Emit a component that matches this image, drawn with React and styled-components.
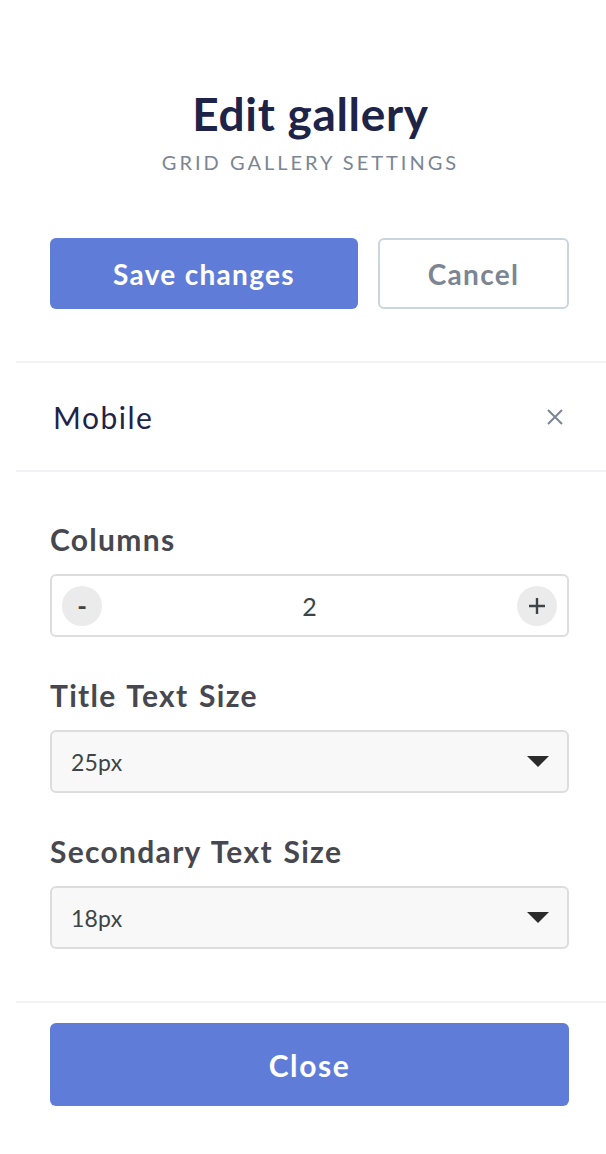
import React from "react";
import styled, { createGlobalStyle } from "styled-components";

const Global = createGlobalStyle`
  html, body { margin: 0; padding: 0; background: #fff; }
  body { font-family: Lato, "Open Sans", sans-serif; -webkit-font-smoothing: antialiased; }
  * { box-sizing: border-box; }
`;

const Page = styled.div`
  padding-left: 16px;
  width: 606px;
  overflow: hidden;
`;

const Inner = styled.div`
  padding: 0 37px 0 34px;
`;

const Header = styled(Inner)`
  padding-top: 89px;
  text-align: center;
`;

const Title = styled.h1`
  margin: 0;
  font-size: 46px;
  line-height: 50px;
  font-weight: 700;
  color: #1e2348;
  letter-spacing: 0.7px;
  padding-left: 2px;
`;

const Subtitle = styled.div`
  margin-top: 11px;
  font-size: 20px;
  line-height: 24px;
  letter-spacing: 3px;
  color: #7b8593;
  text-transform: uppercase;
  padding-left: 2px;
`;

const ButtonRow = styled(Inner)`
  display: flex;
  gap: 20px;
  margin-top: 64px;
  margin-bottom: 52px;
`;

const Button = styled.button`
  font-family: inherit;
  padding: 0;
  height: ${(p) => p.$h || 71}px;
  width: ${(p) => (p.$w ? `${p.$w}px` : "100%")};
  flex: none;
  border-radius: 6px;
  font-size: ${(p) => p.$fs || 28}px;
  font-weight: 700;
  cursor: pointer;
  border: ${(p) => (p.$outline ? "2px solid #cbd5df" : "none")};
  background: ${(p) => (p.$outline ? "#fff" : "#5f7dd8")};
  color: ${(p) => (p.$outline ? "#7b8593" : "#fff")};
  letter-spacing: ${(p) => p.$ls || 1.3}px;
`;

const Divider = styled.hr`
  margin: 0;
  border: none;
  border-top: 2px solid #f0f2f5;
`;

const MobileRow = styled.div`
  display: flex;
  align-items: center;
  justify-content: space-between;
  height: 107px;
  padding: 0 42px 0 37px;
`;

const MobileText = styled.span`
  font-size: 30px;
  color: #1e2348;
  letter-spacing: 1.5px;
`;

const CloseX = styled.span`
  display: flex;
  color: #7b8593;
`;

const Fields = styled(Inner)`
  padding-top: 49px;
  padding-bottom: 52px;
  display: flex;
  flex-direction: column;
`;

const Label = styled.label`
  font-size: 30px;
  font-weight: 700;
  color: #47484f;
  line-height: 36px;
  letter-spacing: 1.3px;
  word-spacing: 2px;
  margin-bottom: 17px;
`;

const Field = styled.div`
  display: flex;
  align-items: center;
  height: 63px;
  border: 2px solid #dddddd;
  border-radius: 6px;
  background: ${(p) => p.$bg || "#fff"};
  margin-bottom: 40px;
  &:last-child { margin-bottom: 0; }
  padding: 0 ${(p) => p.$px || 10}px;
`;

const Circle = styled.span`
  width: 40px;
  height: 40px;
  border-radius: 50%;
  background: #ebebeb;
  color: #3f4447;
  display: flex;
  align-items: center;
  justify-content: center;
  font-size: 26px;
  font-weight: 700;
  line-height: 1;
`;

const Value = styled.span`
  flex: 1;
  text-align: center;
  font-size: 25px;
  color: #3f4447;
`;

const SelectText = styled.span`
  flex: 1;
  font-size: 23px;
  color: #3f4447;
  letter-spacing: 0.2px;
`;

const Caret = styled.span`
  width: 0;
  height: 0;
  border-left: 11px solid transparent;
  border-right: 11px solid transparent;
  border-top: 11px solid #2b2b2b;
  margin-right: -1px;
`;

const Footer = styled(Inner)`
  padding-top: 20px;
  padding-bottom: 48px;
  display: flex;
`;

function Stepper({ value }) {
  return (
    <Field $px={10}>
      <Circle>-</Circle>
      <Value>{value}</Value>
      <Circle>
        <svg width="20" height="20" viewBox="0 0 20 20">
          <path d="M10 2v16M2 10h16" stroke="#3f4447" strokeWidth="2.4" />
        </svg>
      </Circle>
    </Field>
  );
}

function Select({ value }) {
  return (
    <Field $bg="#f8f8f8" $px={19}>
      <SelectText>{value}</SelectText>
      <Caret />
    </Field>
  );
}

export default function App() {
  return (
    <Page>
      <Global />
      <Header>
        <Title>Edit gallery</Title>
        <Subtitle>Grid Gallery Settings</Subtitle>
      </Header>
      <ButtonRow>
        <Button $w={308}>Save changes</Button>
        <Button $outline $w={191}>Cancel</Button>
      </ButtonRow>
      <Divider />
      <MobileRow>
        <MobileText>Mobile</MobileText>
        <CloseX>
          <svg width="18" height="18" viewBox="0 0 18 18">
            <path d="M2 2l14 14M16 2L2 16" stroke="#7b8593" strokeWidth="2" />
          </svg>
        </CloseX>
      </MobileRow>
      <Divider />
      <Fields>
        <Label>Columns</Label>
        <Stepper value={2} />
        <Label>Title Text Size</Label>
        <Select value="25px" />
        <Label>Secondary Text Size</Label>
        <Select value="18px" />
      </Fields>
      <Divider />
      <Footer>
        <Button $h={83} $fs={30} $ls={1.6}>Close</Button>
      </Footer>
    </Page>
  );
}
